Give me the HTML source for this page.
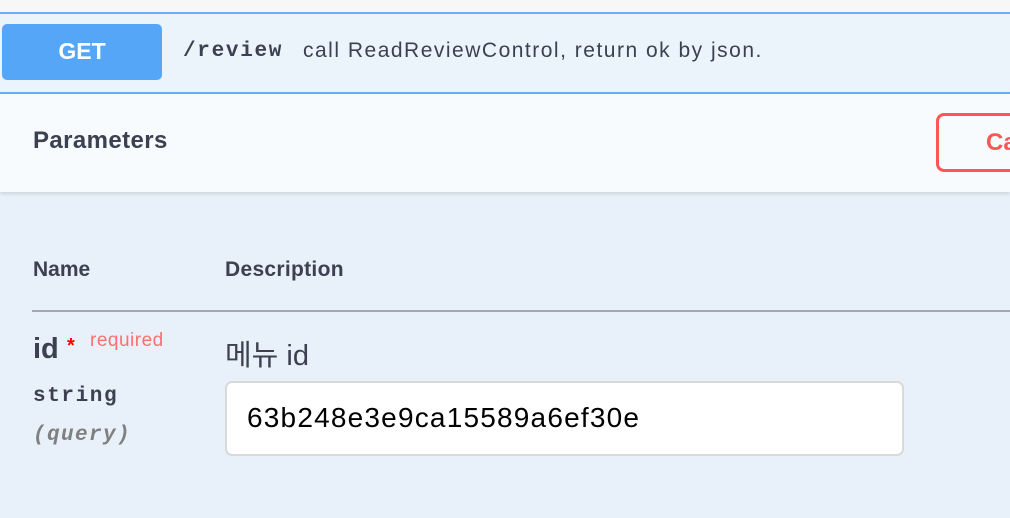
<!DOCTYPE html>
<html style="overflow:hidden"><head><meta charset="utf-8"><style>
*{margin:0;padding:0;box-sizing:border-box}
html,body{width:1010px;height:518px;overflow:hidden}
body{background:#e8f0f9;font-family:"Liberation Sans","Noto Sans CJK KR",sans-serif;color:#3b4151;position:relative}
.abs{position:absolute;white-space:nowrap}
</style></head><body>
<div class="abs" style="left:0;top:0;width:1010px;height:12px;background:#f7f7f7"></div>
<div class="abs" style="left:0;top:12px;width:1010px;height:82px;background:#ebf3fb;border-top:2px solid #61affe;border-bottom:2px solid #61affe"></div>
<div class="abs" style="left:2px;top:24px;width:160px;height:56px;background:#56a6f8;border-radius:5px;color:#fff;font-weight:bold;font-size:23px;text-align:center;line-height:54px">GET</div>
<div class="abs" style="left:183px;top:40px;font-family:'Liberation Mono',monospace;font-weight:bold;font-size:21px;letter-spacing:1.7px">/review</div>
<div class="abs" style="left:303px;top:39px;font-size:21px;letter-spacing:1.5px;color:#3b4151">call ReadReviewControl, return ok by json.</div>
<div class="abs" style="left:0;top:94px;width:1010px;height:98px;background:#f8fbfe;box-shadow:0 2px 4px rgba(0,0,0,.12)"></div>
<div class="abs" style="left:33px;top:127px;font-size:24px;letter-spacing:0.4px;font-weight:bold">Parameters</div>
<div class="abs" style="left:936px;top:113px;width:74px;height:59px;overflow:hidden;border:3px solid #ff5555;border-right:none;border-radius:8px 0 0 8px;color:#ff5555;font-weight:bold;font-size:24px;padding-left:47px;line-height:53px">Ca</div>
<div class="abs" style="left:33px;top:258px;font-size:21px;font-weight:bold">Name</div>
<div class="abs" style="left:225px;top:258px;font-size:21px;font-weight:bold;letter-spacing:0.3px">Description</div>
<div class="abs" style="left:32px;top:310px;width:978px;height:2px;background:#a3a8b1"></div>
<div class="abs" style="left:33px;top:333px;font-size:29px;font-weight:bold">id</div>
<div class="abs" style="left:67px;top:335px;font-size:20px;font-weight:bold;color:red">*</div>
<div class="abs" style="left:90px;top:330px;font-size:19px;letter-spacing:0.5px;color:#ff6f6f">required</div>
<div class="abs" style="left:225px;top:332px;font-size:29px">메뉴 id</div>
<div class="abs" style="left:33px;top:385px;font-family:'Liberation Mono',monospace;font-weight:bold;font-size:21px;letter-spacing:1.6px">string</div>
<div class="abs" style="left:33px;top:424px;font-family:'Liberation Mono',monospace;font-weight:bold;font-style:italic;font-size:21px;letter-spacing:1.4px;color:#808080">(query)</div>
<div class="abs" style="left:225px;top:381px;width:679px;height:75px;background:#fff;border:2px solid #d9d9d9;border-radius:7px;font-size:28px;letter-spacing:1.2px;color:#000;padding-left:20px;line-height:70px">63b248e3e9ca15589a6ef30e</div>
</body></html>
